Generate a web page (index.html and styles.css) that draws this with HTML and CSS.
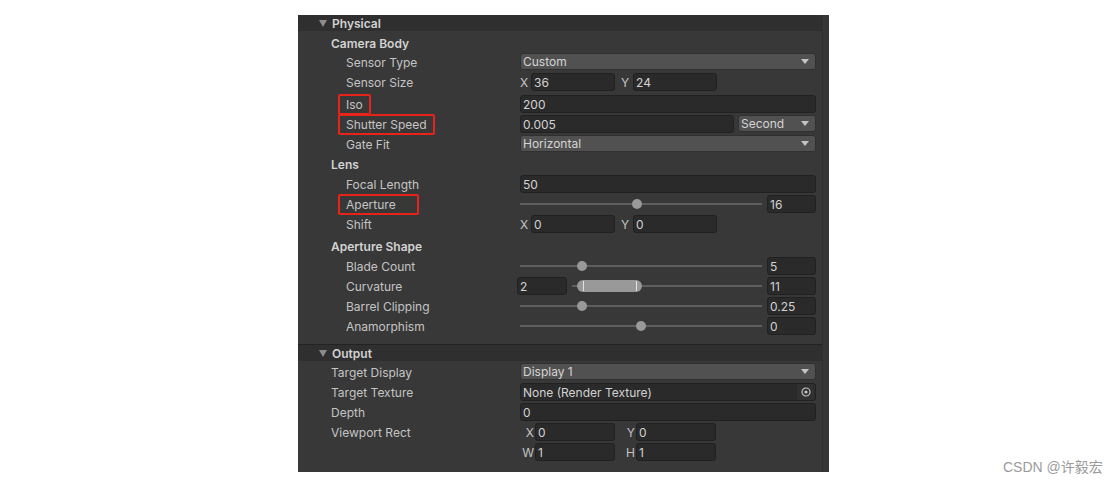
FILE: index.html
```html
<!DOCTYPE html>
<html>
<head>
<meta charset="utf-8">
<link rel="stylesheet" href="styles.css">
</head>
<body>
<div class="page">
  <div class="panel">
    <div class="content">
      <div class="section">
        <div class="header"><span class="tri"></span><span class="htext">Physical</span></div>
        <div class="body">
          <div class="row first"><div class="label l1 bold">Camera Body</div></div>
          <div class="row"><div class="label l2">Sensor Type</div><div class="field"><div class="dropdown"><span>Custom</span><span class="arrow"></span></div></div></div>
          <div class="row tall"><div class="label l2">Sensor Size</div><div class="field vec"><span class="axis">X</span><div class="input small">36</div><span class="axis ay">Y</span><div class="input small">24</div></div></div>
          <div class="row"><div class="label l2"><span class="mark">Iso</span></div><div class="field"><div class="input full">200</div></div></div>
          <div class="row"><div class="label l2"><span class="mark">Shutter Speed</span></div><div class="field split"><div class="input grow">0.005</div><div class="dropdown unit"><span>Second</span><span class="arrow"></span></div></div></div>
          <div class="row"><div class="label l2">Gate Fit</div><div class="field"><div class="dropdown"><span>Horizontal</span><span class="arrow"></span></div></div></div>
          <div class="row"><div class="label l1 bold">Lens</div></div>
          <div class="row"><div class="label l2">Focal Length</div><div class="field"><div class="input full">50</div></div></div>
          <div class="row"><div class="label l2"><span class="mark wide">Aperture</span></div><div class="field slider"><div class="track"><span class="thumb" style="left:117px"></span></div><div class="input num">16</div></div></div>
          <div class="row tall"><div class="label l2">Shift</div><div class="field vec"><span class="axis">X</span><div class="input small">0</div><span class="axis ay">Y</span><div class="input small">0</div></div></div>
          <div class="row"><div class="label l1 bold">Aperture Shape</div></div>
          <div class="row"><div class="label l2">Blade Count</div><div class="field slider"><div class="track"><span class="thumb" style="left:62px"></span></div><div class="input num">5</div></div></div>
          <div class="row"><div class="label l2">Curvature</div><div class="field slider minmax"><div class="input minnum">2</div><div class="track short"><span class="range"></span></div><div class="input num">11</div></div></div>
          <div class="row"><div class="label l2">Barrel Clipping</div><div class="field slider"><div class="track"><span class="thumb" style="left:62px"></span></div><div class="input num">0.25</div></div></div>
          <div class="row"><div class="label l2">Anamorphism</div><div class="field slider"><div class="track"><span class="thumb" style="left:121px"></span></div><div class="input num">0</div></div></div>
        </div>
      </div>
      <div class="section out">
        <div class="header"><span class="tri"></span><span class="htext">Output</span></div>
        <div class="body">
          <div class="row"><div class="label l1">Target Display</div><div class="field"><div class="dropdown"><span>Display 1</span><span class="arrow"></span></div></div></div>
          <div class="row"><div class="label l1">Target Texture</div><div class="field"><div class="input full objf"><span>None (Render Texture)</span><span class="picker"><svg width="10" height="10" viewBox="0 0 10 10"><circle cx="5" cy="5" r="4" fill="none" stroke="#c4c4c4" stroke-width="1.2"/><circle cx="5" cy="5" r="1.6" fill="#c4c4c4"/></svg></span></div></div></div>
          <div class="row"><div class="label l1">Depth</div><div class="field"><div class="input full">0</div></div></div>
          <div class="row"><div class="label l1">Viewport Rect</div><div class="field vec rect"><span class="axis">X</span><div class="input small">0</div><span class="axis ay">Y</span><div class="input small">0</div></div></div>
          <div class="row"><div class="label l1"></div><div class="field vec rect"><span class="axis">W</span><div class="input small">1</div><span class="axis ay">H</span><div class="input small">1</div></div></div>
        </div>
      </div>
    </div>
    <div class="scroll"></div>
  </div>
  <div class="watermark">CSDN @许毅宏</div>
</div>
</body>
</html>
```

FILE: styles.css
```css
html, body {
  margin: 0;
  padding: 0;
  background: #ffffff;
}
.page {
  position: relative;
  width: 1119px;
  height: 482px;
  padding: 15px 0 0 298px;
  box-sizing: border-box;
  font-family: Inter, "Noto Sans", "Noto Sans CJK SC", sans-serif;
  font-size: 12px;
}
.panel {
  width: 531px;
  height: 457px;
  display: flex;
  background: #383838;
}
.content {
  width: 524px;
  display: flex;
  flex-direction: column;
}
.scroll {
  width: 6px;
  border-left: 1px solid #303030;
  background: #363636;
}
.header {
  height: 16px;
  background: #2f2f2f;
  display: flex;
  align-items: center;
  color: #d2d2d2;
  font-weight: 600;
  line-height: 16px;
}
.tri {
  width: 0;
  height: 0;
  margin-left: 21px;
  margin-right: 7px;
  border-left: 4px solid transparent;
  border-right: 4px solid transparent;
  border-top: 7px solid #8c8c8c;
}
.htext {
  margin-left: -2px;
  padding-top: 1px;
}
.section .body {
  padding-top: 2px;
}
.section:first-child .body {
  padding-bottom: 7px;
  border-bottom: 1px solid #232323;
}
.out .body {
  padding-top: 2px;
}
.row {
  display: grid;
  grid-template-columns: 222px 296px;
  height: 18px;
  margin-bottom: 2px;
  color: #c4c4c4;
  line-height: 18px;
}
.row.tall {
  height: 20px;
}
.label {
  white-space: nowrap;
  padding-top: 1px;
}
.row.first .label {
  padding-top: 2px;
}
.l1 { padding-left: 33px; }
.l2 { padding-left: 48px; }
.bold {
  font-weight: 600;
  color: #d2d2d2;
}
.mark {
  display: inline-block;
  position: relative;
}
.mark::after {
  content: "";
  position: absolute;
  left: -8px;
  right: -8px;
  top: -2px;
  bottom: -1px;
  border: 2px solid #e8231a;
  border-radius: 2px;
}
.mark.wide::after {
  right: -23px;
}
.field {
  display: flex;
  align-items: flex-start;
  height: 18px;
}
.dropdown {
  flex: 1;
  height: 17px;
  box-sizing: border-box;
  background: #515151;
  border: 1px solid #303030;
  border-radius: 3px;
  color: #d4d4d4;
  display: flex;
  align-items: center;
  justify-content: space-between;
  padding: 0 6px 0 2px;
  line-height: 15px;
}
.arrow {
  width: 0;
  height: 0;
  border-left: 4px solid transparent;
  border-right: 4px solid transparent;
  border-top: 5px solid #c4c4c4;
}
.input {
  height: 18px;
  box-sizing: border-box;
  background: #2a2a2a;
  border: 1px solid #212121;
  border-radius: 3px;
  color: #d2d2d2;
  padding-left: 2px;
  line-height: 17px;
}
.input.full {
  flex: 1;
}
.split .grow {
  flex: 1;
}
.split .unit {
  flex: 0 0 78px;
  margin-left: 4px;
  padding-left: 2px;
}
.vec .axis {
  width: 11px;
  color: #c4c4c4;
  line-height: 19px;
}
.vec .input.small {
  width: 84px;
}
.vec .ay {
  width: 12px;
  margin-left: 6px;
}
.rect .axis {
  width: 15px;
  text-align: right;
  padding-right: 1px;
  box-sizing: border-box;
}
.rect .input.small {
  width: 80px;
}
.rect .ay {
  width: 21px;
  margin-left: 0;
}
.slider {
  align-items: center;
}
.track {
  position: relative;
  width: 242px;
  height: 2px;
  background: #5e5e5e;
  margin-right: 5px;
}
.track.short {
  width: 190px;
  margin-left: 5px;
}
.thumb {
  position: absolute;
  top: -4px;
  width: 10px;
  height: 10px;
  margin-left: -5px;
  border-radius: 50%;
  background: #999999;
}
.range {
  position: absolute;
  top: -5px;
  left: 5px;
  width: 65px;
  height: 12px;
  border-radius: 6px;
  background: #999999;
}
.range::before,
.range::after {
  content: "";
  position: absolute;
  top: 1px;
  width: 1px;
  height: 10px;
  background: #e2e2e2;
}
.range::before { left: 6px; }
.range::after { right: 5px; }
.input.num {
  width: 49px;
}
.minmax .minnum {
  width: 50px;
  margin-left: -3px;
}
.objf {
  display: flex;
  justify-content: space-between;
  padding-right: 0;
}
.picker {
  width: 18px;
  height: 16px;
  background: #303030;
  border-radius: 0 3px 3px 0;
  display: flex;
  align-items: center;
  justify-content: center;
}
.watermark {
  position: absolute;
  left: 1003px;
  top: 456px;
  font-family: "Liberation Sans", "Noto Sans CJK SC", sans-serif;
  font-size: 14px;
  color: #9a9a9a;
}
```
